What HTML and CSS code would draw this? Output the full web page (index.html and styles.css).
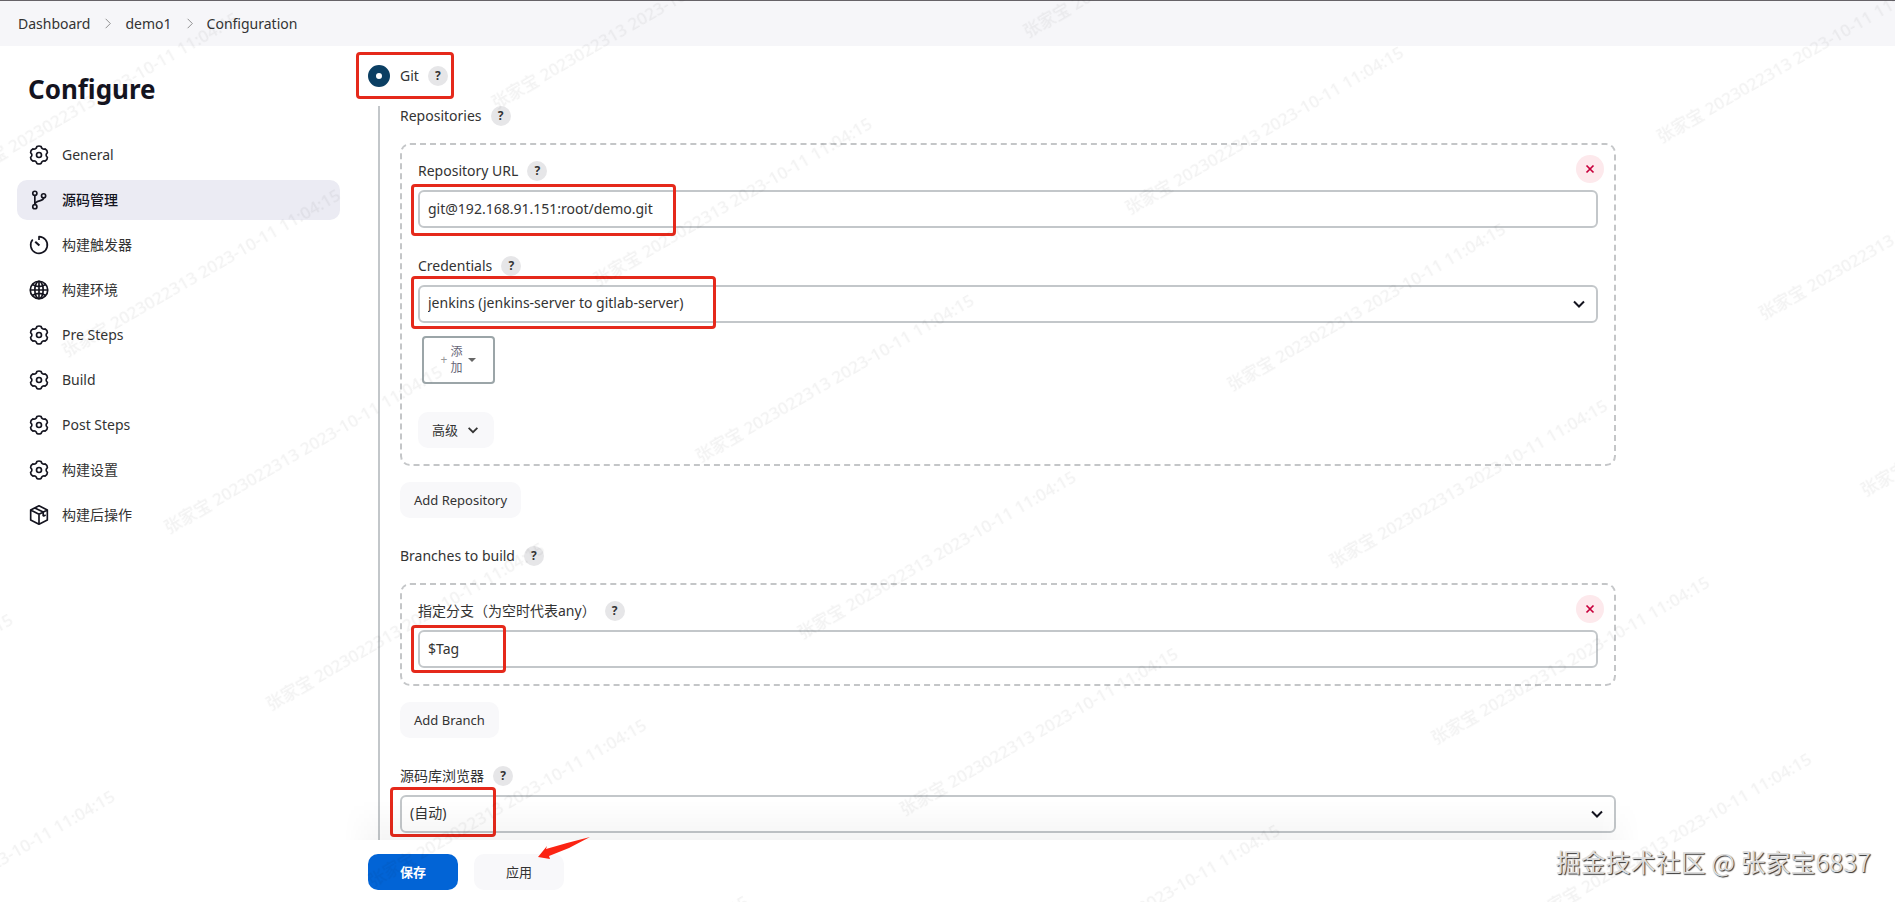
FILE: index.html
```html
<!DOCTYPE html>
<html lang="zh">
<head>
  <meta charset="UTF-8" />
  <title>demo1 Config [Jenkins]</title>
  <link rel="stylesheet" href="styles.css">
</head>
<body>
  <!-- shared icons -->
  <svg class="sprite" aria-hidden="true">
    <symbol id="gear" viewBox="0 0 24 24">
      <path d="M9.5 1.8Q12 .6 14.5 1.8C15 4.5 17 5.5 19.5 4.7Q22.2 6.1 22.1 9.1C20 11 20 13 22.1 14.9Q22.2 17.9 19.5 19.3C17 18.5 15 19.5 14.5 22.2Q12 23.4 9.5 22.2C9 19.5 7 18.5 4.5 19.3Q1.8 17.9 1.9 14.9C4 13 4 11 1.9 9.1Q1.8 6.1 4.5 4.7C7 5.5 9 4.5 9.5 1.8z"/>
      <circle cx="12" cy="12" r="3"/>
    </symbol>
    <symbol id="chevron" viewBox="0 0 16 16"><path d="M3 5.5l5 5 5-5"/></symbol>
    <symbol id="arrow" viewBox="0 0 16 16"><path d="M6 3l5 5-5 5"/></symbol>
    <symbol id="cross" viewBox="0 0 16 16"><path d="M4 4l8 8M12 4l-8 8"/></symbol>
  </svg>

  <nav class="breadcrumbs">
    <a href="#">Dashboard</a>
    <svg class="sep"><use href="#arrow"/></svg>
    <a href="#">demo1</a>
    <svg class="sep"><use href="#arrow"/></svg>
    <a href="#">Configuration</a>
  </nav>

  <div class="page">
    <aside class="side">
      <h1>Configure</h1>
      <nav class="tasks">
        <a href="#"><svg class="icon"><use href="#gear"/></svg>General</a>
        <a href="#" class="active">
          <svg class="icon" viewBox="0 0 24 24"><circle cx="7" cy="4" r="2.5"/><circle cx="7" cy="20" r="2.5"/><circle cx="17.5" cy="7" r="2.5"/><path d="M7 6.5v11M17.5 9.5c0 4.5-10.5 2.5-10.5 8"/></svg>源码管理</a>
        <a href="#">
          <svg class="icon" viewBox="0 0 24 24"><path d="M12 6V2a10 10 0 1 1-7.5 3.4"/><path d="M7.5 8l5 4.5" stroke-width="2.5"/></svg>构建触发器</a>
        <a href="#">
          <svg class="icon" viewBox="0 0 24 24"><circle cx="12" cy="12" r="10.5"/><ellipse cx="12" cy="12" rx="5" ry="10.5"/><path d="M12 1.5v21M1.5 12h21M4 5.5c5 3 11 3 16 0M4 18.5c5-3 11-3 16 0"/></svg>构建环境</a>
        <a href="#"><svg class="icon"><use href="#gear"/></svg>Pre Steps</a>
        <a href="#"><svg class="icon"><use href="#gear"/></svg>Build</a>
        <a href="#"><svg class="icon"><use href="#gear"/></svg>Post Steps</a>
        <a href="#"><svg class="icon"><use href="#gear"/></svg>构建设置</a>
        <a href="#">
          <svg class="icon" viewBox="0 0 24 24"><path d="M12 1l10 5v12l-10 5-10-5V6zM2 6l10 5 10-5M12 11v12M7 3.5l10 5v5M17 13.5l3-1.5"/></svg>构建后操作</a>
      </nav>
    </aside>

    <main class="content">
      <form class="config">
        <div class="radio-row">
          <input type="radio" id="git" name="scm" checked>
          <label for="git">Git</label>
          <button type="button" class="help">?</button>
          <span class="mark mark-git"></span>
        </div>

        <div class="nested">
          <div class="label-row"><span>Repositories</span><button type="button" class="help">?</button></div>
          <section class="repeat">
            <button type="button" class="remove" aria-label="Remove"><svg><use href="#cross"/></svg></button>
            <div class="label-row"><label for="url">Repository URL</label><button type="button" class="help">?</button></div>
            <div class="field">
              <input type="text" id="url" value="git@192.168.91.151:root/demo.git">
              <span class="mark mark-url"></span>
            </div>
            <div class="label-row second"><label for="cred">Credentials</label><button type="button" class="help">?</button></div>
            <div class="field">
              <select id="cred"><option>jenkins (jenkins-server to gitlab-server)</option></select>
              <svg class="chevron"><use href="#chevron"/></svg>
              <span class="mark mark-cred"></span>
            </div>
            <button type="button" class="add-cred"><span class="plus">+</span><span class="add-text">添加</span><span class="caret"></span></button>
            <button type="button" class="btn advanced">高级 <svg><use href="#chevron"/></svg></button>
          </section>
          <button type="button" class="btn">Add Repository</button>

          <div class="label-row group"><span>Branches to build</span><button type="button" class="help">?</button></div>
          <section class="repeat">
            <button type="button" class="remove" aria-label="Remove"><svg><use href="#cross"/></svg></button>
            <div class="label-row"><label for="branch">指定分支（为空时代表any）</label><button type="button" class="help">?</button></div>
            <div class="field">
              <input type="text" id="branch" value="$Tag">
              <span class="mark mark-tag"></span>
            </div>
          </section>
          <button type="button" class="btn">Add Branch</button>

          <div class="label-row group browser"><label for="browser">源码库浏览器</label><button type="button" class="help">?</button></div>
          <div class="field">
            <select id="browser"><option>(自动)</option></select>
            <svg class="chevron"><use href="#chevron"/></svg>
            <span class="mark mark-auto"></span>
          </div>
        </div>

        <div class="bottom-bar">
          <button type="submit" class="btn primary">保存</button>
          <button type="button" class="btn apply">应用</button>
          <svg class="pointer" viewBox="0 0 54 24"><path d="M53 1L30 7 9 13 10 10 1 21 13 23 12 20 32 12z"/></svg>
        </div>
      </form>
    </main>
  </div>

  <svg class="watermark" aria-hidden="true">
    <defs>
      <pattern id="wm" x="373" y="112" width="496" height="204" patternUnits="userSpaceOnUse" patternTransform="rotate(-30)">
        <text x="2" y="27">张家宝 2023022313 2023-10-11 11:04:15</text>
      </pattern>
    </defs>
    <rect width="100%" height="100%" fill="url(#wm)"/>
  </svg>
  <div class="credit">掘金技术社区 @ 张家宝6837</div>
</body>
</html>
```
FILE: styles.css
```css
* {
  box-sizing: border-box;
}
body {
  margin: 0;
  min-height: 100vh;
  display: flex;
  flex-direction: column;
  position: relative;
  overflow: hidden;
  font-family: "Noto Sans", "Noto Sans CJK SC", sans-serif;
  font-size: 14px;
  line-height: 20px;
  color: #333;
  background: #fff;
}
a {
  color: inherit;
  text-decoration: none;
}
button, input, select {
  font: inherit;
  color: inherit;
}
svg {
  fill: none;
  stroke: currentColor;
}
.sprite {
  position: absolute;
  width: 0;
  height: 0;
}

/* header */
.breadcrumbs {
  display: flex;
  align-items: center;
  gap: 10px;
  height: 46px;
  padding: 0 18px;
  border-top: 1px solid #666368;
  background: #f6f6f9;
}
.sep {
  width: 15px;
  height: 15px;
  color: #888;
}

.page {
  display: flex;
  flex: 1;
}

/* sidebar */
.side {
  width: 356px;
  padding: 23px 16px 0 17px;
}
.side h1 {
  margin: 0 0 26px 11px;
  font-size: 26px;
  line-height: 40px;
  color: #14141f;
}
.tasks {
  display: flex;
  flex-direction: column;
  gap: 5px;
}
.tasks a {
  display: flex;
  align-items: center;
  gap: 13px;
  height: 40px;
  padding-left: 12px;
  border-radius: 10px;
}
.tasks .active {
  background: #ebebf3;
  color: #14141f;
  font-weight: 500;
}
.icon {
  width: 20px;
  height: 20px;
  overflow: visible;
  color: #14141f;
  stroke-width: 2;
  stroke-linejoin: round;
}

/* form */
.content {
  flex: 1;
  min-width: 0;
}
.config {
  max-width: 1260px;
  height: 100%;
  display: flex;
  flex-direction: column;
}
.radio-row {
  position: relative;
  display: flex;
  align-items: center;
  height: 60px;
  padding-left: 12px;
}
.radio-row input {
  appearance: none;
  width: 22px;
  height: 22px;
  margin: 0 10px 0 0;
  border: 8px solid #0b3f63;
  border-radius: 50%;
  background: #fff;
}
.nested {
  flex: 1;
  margin-left: 22px;
  padding-left: 20px;
  border-left: 2px solid #c3c7ca;
}
.label-row {
  display: flex;
  align-items: center;
  height: 20px;
}
.help {
  width: 20px;
  height: 20px;
  margin-left: 9px;
  padding: 0;
  border: 0;
  border-radius: 50%;
  background: #e6e6e8;
  font-size: 12px;
  font-weight: 700;
  line-height: 20px;
}
.repeat {
  position: relative;
  margin: 17px 0 16px;
  padding: 16px;
  border: 2px dashed #c4c6c8;
  border-radius: 10px;
}
.repeat .label-row,
.browser {
  margin-bottom: 9px;
}
.repeat .second {
  margin-top: 28px;
}
.remove {
  position: absolute;
  top: 10px;
  right: 10px;
  width: 28px;
  height: 28px;
  padding: 7px;
  border: 0;
  border-radius: 50%;
  background: #fde9ec;
  color: #c8003c;
}
.remove svg {
  display: block;
  width: 14px;
  height: 14px;
  stroke-width: 2;
}
.field {
  position: relative;
}
.field input,
.field select {
  display: block;
  width: 100%;
  height: 38px;
  padding: 0 8px 2px;
  border: 2px solid #c3c7ca;
  border-radius: 6px;
  background: #fff;
  appearance: none;
}
.chevron {
  position: absolute;
  top: 11px;
  right: 11px;
  width: 16px;
  height: 16px;
  color: #14141f;
  stroke-width: 2;
}
.add-cred {
  display: flex;
  align-items: center;
  justify-content: center;
  gap: 3px;
  width: 73px;
  height: 48px;
  margin: 13px 0 28px 4px;
  padding: 0;
  border: 2px solid #9ba5a8;
  border-radius: 4px;
  background: #fff;
  color: #666677;
  font-size: 12px;
  line-height: 16px;
}
.add-text {
  width: 12px;
}
.plus {
  color: #999;
}
.caret {
  margin-left: 3px;
  border: 4px solid transparent;
  border-top-color: #666;
  border-bottom: 0;
}
.btn {
  display: flex;
  align-items: center;
  justify-content: center;
  height: 36px;
  padding: 0 14px;
  border: 0;
  border-radius: 10px;
  background: #f8f8fa;
  font-size: 13px;
}
.btn svg {
  width: 14px;
  height: 14px;
  margin-left: 8px;
  stroke-width: 2;
}
.group {
  margin-top: 28px;
}

/* save / apply */
.bottom-bar {
  position: relative;
  display: flex;
  gap: 16px;
  height: 62px;
  padding: 14px 12px 0;
  background: #fff;
}
.bottom-bar::before {
  content: "";
  position: absolute;
  right: -24px;
  bottom: 100%;
  left: -12px;
  height: 40px;
  background: linear-gradient(transparent, rgba(0, 0, 0, 0.04));
  mask-image: linear-gradient(90deg, transparent, #000 40px, #000 calc(100% - 40px), transparent);
  pointer-events: none;
}
.primary,
.apply {
  width: 90px;
}
.primary {
  background: #0264d6;
  color: #fff;
  font-weight: 700;
}

/* red highlights */
.mark {
  position: absolute;
  border: 3px solid #e5291b;
  border-radius: 4px;
  pointer-events: none;
}
.mark-git {
  top: 6px;
  left: 0;
  width: 98px;
  height: 47px;
}
.mark-url {
  top: -6px;
  left: -7px;
  width: 265px;
  height: 52px;
}
.mark-cred {
  top: -9px;
  left: -7px;
  width: 305px;
  height: 53px;
}
.mark-tag {
  top: -5px;
  left: -7px;
  width: 95px;
  height: 48px;
}
.mark-auto {
  top: -8px;
  left: -10px;
  width: 106px;
  height: 50px;
}
.pointer {
  position: absolute;
  top: -4px;
  left: 181px;
  width: 54px;
  height: 24px;
  fill: #fb2413;
  stroke: none;
}

.watermark {
  position: absolute;
  inset: 0;
  width: 100%;
  height: 100%;
  stroke: none;
  pointer-events: none;
}
.watermark text {
  fill: rgba(0, 0, 0, 0.05);
  font-family: "Noto Sans", "Noto Sans CJK SC", sans-serif;
  font-size: 17px;
  font-weight: 500;
}
.credit {
  position: absolute;
  right: 24px;
  bottom: 23px;
  font-family: "Noto Sans CJK SC", sans-serif;
  font-size: 25px;
  line-height: 36px;
  color: #ddd;
  text-shadow: 1px 1px 1px #333;
}
```
